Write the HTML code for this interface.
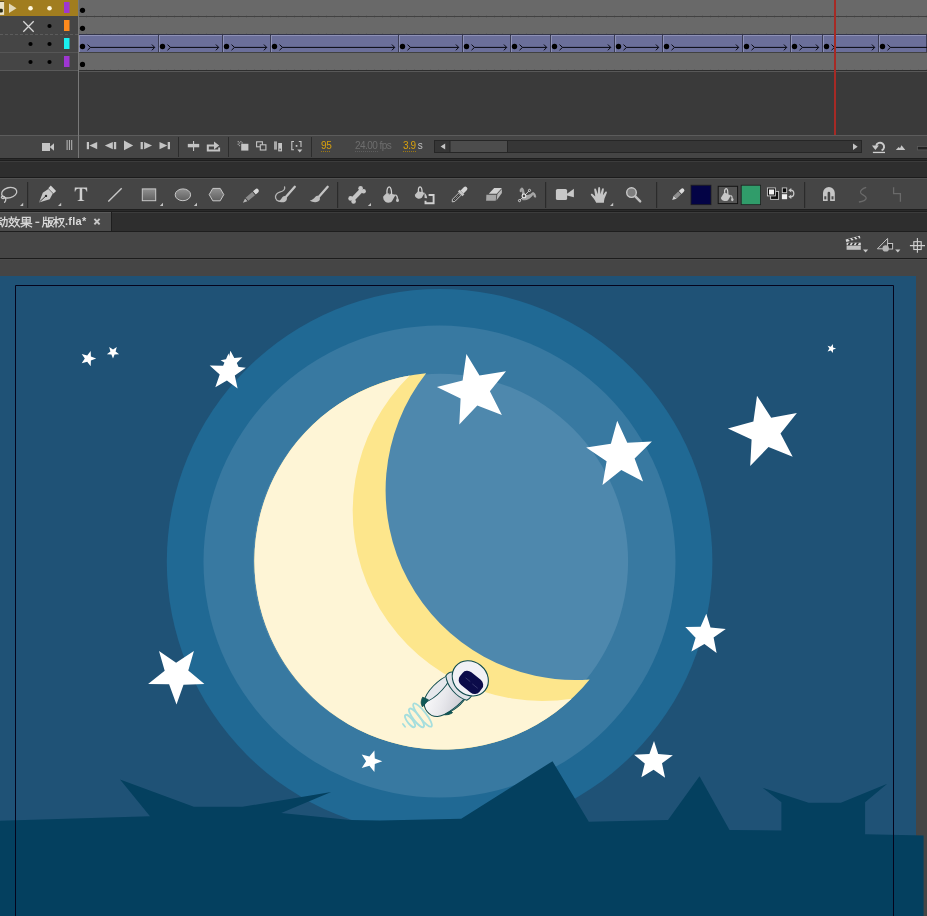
<!DOCTYPE html>
<html><head><meta charset="utf-8"><title>Animate</title>
<style>
html,body{margin:0;padding:0;}
body{width:927px;height:916px;overflow:hidden;background:#454545;position:relative;font-family:"Liberation Sans",sans-serif;}
.a{position:absolute;}
svg{position:absolute;left:0;top:0;overflow:visible;}
</style></head><body>

<div class="a" style="left:0;top:0;width:927px;height:135px;background:#3a3a3a"></div>
<div class="a" style="left:0;top:0;width:78px;height:16px;background:#a17d1f"></div>
<div class="a" style="left:0;top:16px;width:78px;height:54px;background:#454545"></div>
<div class="a" style="left:79px;top:0;width:848px;height:70px;background:#696969"></div>
<div class="a" style="left:79px;top:15px;width:848px;height:3px;background:repeating-linear-gradient(90deg,rgba(0,0,0,0) 0 7px,rgba(40,40,40,0.14) 7px 8px)"></div>
<div class="a" style="left:79px;top:33px;width:848px;height:3px;background:repeating-linear-gradient(90deg,rgba(0,0,0,0) 0 7px,rgba(40,40,40,0.14) 7px 8px)"></div>
<div class="a" style="left:79px;top:69px;width:848px;height:3px;background:repeating-linear-gradient(90deg,rgba(0,0,0,0) 0 7px,rgba(40,40,40,0.14) 7px 8px)"></div>
<div class="a" style="left:79px;top:16px;width:848px;height:1px;background:#414141"></div>
<div class="a" style="left:79px;top:34px;width:848px;height:1px;background:#33354a"></div>
<div class="a" style="left:79px;top:52px;width:848px;height:1px;background:#414141"></div>
<div class="a" style="left:79px;top:70px;width:848px;height:1px;background:#2e2e2e"></div>
<div class="a" style="left:0;top:34px;width:78px;height:1px;background:repeating-linear-gradient(90deg,#5c5c5c 0 3px,#454545 3px 5px)"></div>
<div class="a" style="left:0;top:52px;width:78px;height:1px;background:#565656"></div>
<div class="a" style="left:0;top:70px;width:78px;height:1px;background:#5a5a5a"></div>
<div class="a" style="left:79px;top:71px;width:848px;height:1px;background:#585858"></div>
<div class="a" style="left:78px;top:0;width:1px;height:158px;background:#787878"></div>
<div class="a" style="left:79px;top:35px;width:79px;height:17px;background:#6b6f9a;box-shadow:inset 1px 1px 0 #8e91b6"></div>
<div class="a" style="left:158px;top:35px;width:1px;height:17px;background:#3a3c55"></div>
<div class="a" style="left:159px;top:35px;width:63px;height:17px;background:#6b6f9a;box-shadow:inset 1px 1px 0 #8e91b6"></div>
<div class="a" style="left:222px;top:35px;width:1px;height:17px;background:#3a3c55"></div>
<div class="a" style="left:223px;top:35px;width:47px;height:17px;background:#6b6f9a;box-shadow:inset 1px 1px 0 #8e91b6"></div>
<div class="a" style="left:270px;top:35px;width:1px;height:17px;background:#3a3c55"></div>
<div class="a" style="left:271px;top:35px;width:127px;height:17px;background:#6b6f9a;box-shadow:inset 1px 1px 0 #8e91b6"></div>
<div class="a" style="left:398px;top:35px;width:1px;height:17px;background:#3a3c55"></div>
<div class="a" style="left:399px;top:35px;width:63px;height:17px;background:#6b6f9a;box-shadow:inset 1px 1px 0 #8e91b6"></div>
<div class="a" style="left:462px;top:35px;width:1px;height:17px;background:#3a3c55"></div>
<div class="a" style="left:463px;top:35px;width:47px;height:17px;background:#6b6f9a;box-shadow:inset 1px 1px 0 #8e91b6"></div>
<div class="a" style="left:510px;top:35px;width:1px;height:17px;background:#3a3c55"></div>
<div class="a" style="left:511px;top:35px;width:39px;height:17px;background:#6b6f9a;box-shadow:inset 1px 1px 0 #8e91b6"></div>
<div class="a" style="left:550px;top:35px;width:1px;height:17px;background:#3a3c55"></div>
<div class="a" style="left:551px;top:35px;width:63px;height:17px;background:#6b6f9a;box-shadow:inset 1px 1px 0 #8e91b6"></div>
<div class="a" style="left:614px;top:35px;width:1px;height:17px;background:#3a3c55"></div>
<div class="a" style="left:615px;top:35px;width:47px;height:17px;background:#6b6f9a;box-shadow:inset 1px 1px 0 #8e91b6"></div>
<div class="a" style="left:662px;top:35px;width:1px;height:17px;background:#3a3c55"></div>
<div class="a" style="left:663px;top:35px;width:79px;height:17px;background:#6b6f9a;box-shadow:inset 1px 1px 0 #8e91b6"></div>
<div class="a" style="left:742px;top:35px;width:1px;height:17px;background:#3a3c55"></div>
<div class="a" style="left:743px;top:35px;width:47px;height:17px;background:#6b6f9a;box-shadow:inset 1px 1px 0 #8e91b6"></div>
<div class="a" style="left:790px;top:35px;width:1px;height:17px;background:#3a3c55"></div>
<div class="a" style="left:791px;top:35px;width:31px;height:17px;background:#6b6f9a;box-shadow:inset 1px 1px 0 #8e91b6"></div>
<div class="a" style="left:822px;top:35px;width:1px;height:17px;background:#3a3c55"></div>
<div class="a" style="left:823px;top:35px;width:55px;height:17px;background:#6b6f9a;box-shadow:inset 1px 1px 0 #8e91b6"></div>
<div class="a" style="left:878px;top:35px;width:1px;height:17px;background:#3a3c55"></div>
<div class="a" style="left:879px;top:35px;width:47px;height:17px;background:#6b6f9a;box-shadow:inset 1px 1px 0 #8e91b6"></div>
<div class="a" style="left:926px;top:35px;width:1px;height:17px;background:#3a3c55"></div>
<svg width="927" height="135"><path d="M90.5 47.4H154.7M87.5 44.6l3 2.8l-3 2.8M151.89999999999998 44.5l2.8 2.9l-2.8 2.9" stroke="#06060f" stroke-width="1" fill="none"/><circle cx="82.5" cy="46.5" r="2.7" fill="#000"/><path d="M170.5 47.4H218.7M167.5 44.6l3 2.8l-3 2.8M215.89999999999998 44.5l2.8 2.9l-2.8 2.9" stroke="#06060f" stroke-width="1" fill="none"/><circle cx="162.5" cy="46.5" r="2.7" fill="#000"/><path d="M234.5 47.4H266.7M231.5 44.6l3 2.8l-3 2.8M263.9 44.5l2.8 2.9l-2.8 2.9" stroke="#06060f" stroke-width="1" fill="none"/><circle cx="226.5" cy="46.5" r="2.7" fill="#000"/><path d="M282.5 47.4H394.7M279.5 44.6l3 2.8l-3 2.8M391.9 44.5l2.8 2.9l-2.8 2.9" stroke="#06060f" stroke-width="1" fill="none"/><circle cx="274.5" cy="46.5" r="2.7" fill="#000"/><path d="M410.5 47.4H458.7M407.5 44.6l3 2.8l-3 2.8M455.9 44.5l2.8 2.9l-2.8 2.9" stroke="#06060f" stroke-width="1" fill="none"/><circle cx="402.5" cy="46.5" r="2.7" fill="#000"/><path d="M474.5 47.4H506.7M471.5 44.6l3 2.8l-3 2.8M503.9 44.5l2.8 2.9l-2.8 2.9" stroke="#06060f" stroke-width="1" fill="none"/><circle cx="466.5" cy="46.5" r="2.7" fill="#000"/><path d="M522.5 47.4H546.7M519.5 44.6l3 2.8l-3 2.8M543.9000000000001 44.5l2.8 2.9l-2.8 2.9" stroke="#06060f" stroke-width="1" fill="none"/><circle cx="514.5" cy="46.5" r="2.7" fill="#000"/><path d="M562.5 47.4H610.7M559.5 44.6l3 2.8l-3 2.8M607.9000000000001 44.5l2.8 2.9l-2.8 2.9" stroke="#06060f" stroke-width="1" fill="none"/><circle cx="554.5" cy="46.5" r="2.7" fill="#000"/><path d="M626.5 47.4H658.7M623.5 44.6l3 2.8l-3 2.8M655.9000000000001 44.5l2.8 2.9l-2.8 2.9" stroke="#06060f" stroke-width="1" fill="none"/><circle cx="618.5" cy="46.5" r="2.7" fill="#000"/><path d="M674.5 47.4H738.7M671.5 44.6l3 2.8l-3 2.8M735.9000000000001 44.5l2.8 2.9l-2.8 2.9" stroke="#06060f" stroke-width="1" fill="none"/><circle cx="666.5" cy="46.5" r="2.7" fill="#000"/><path d="M754.5 47.4H786.7M751.5 44.6l3 2.8l-3 2.8M783.9000000000001 44.5l2.8 2.9l-2.8 2.9" stroke="#06060f" stroke-width="1" fill="none"/><circle cx="746.5" cy="46.5" r="2.7" fill="#000"/><path d="M802.5 47.4H818.7M799.5 44.6l3 2.8l-3 2.8M815.9000000000001 44.5l2.8 2.9l-2.8 2.9" stroke="#06060f" stroke-width="1" fill="none"/><circle cx="794.5" cy="46.5" r="2.7" fill="#000"/><path d="M834.5 47.4H874.7M831.5 44.6l3 2.8l-3 2.8M871.9000000000001 44.5l2.8 2.9l-2.8 2.9" stroke="#06060f" stroke-width="1" fill="none"/><circle cx="826.5" cy="46.5" r="2.7" fill="#000"/><path d="M890.5 47.4H1026.7M887.5 44.6l3 2.8l-3 2.8M1023.9000000000001 44.5l2.8 2.9l-2.8 2.9" stroke="#06060f" stroke-width="1" fill="none"/><circle cx="882.5" cy="46.5" r="2.7" fill="#000"/><circle cx="82.5" cy="10.3" r="2.6" fill="#000"/><circle cx="82.5" cy="28.3" r="2.6" fill="#000"/><circle cx="82.5" cy="64.4" r="2.6" fill="#000"/></svg>
<svg width="80" height="72"><rect x="0" y="1.6" width="4.1" height="13.3" fill="#ebe3c8"/><rect x="-1" y="8.8" width="3.8" height="3.7" rx="1.3" fill="#2a2a14"/><rect x="0" y="1" width="4.1" height="0.8" fill="#4a3a10"/><path d="M9 3.5L16.5 8.3L9 13Z" fill="#e3d9b8"/><circle cx="30.5" cy="8.2" r="2.3" fill="#fff8e0"/><circle cx="49.5" cy="8.2" r="2.3" fill="#fff8e0"/><rect x="64" y="2" width="5.5" height="11" fill="#9e36d2"/><path d="M23.3 21.3L33.7 31.7M33.7 21.3L23.3 31.7" stroke="#d8d8d8" stroke-width="1.3"/><circle cx="49.5" cy="26" r="2.1" fill="#000"/><rect x="64" y="20" width="5.5" height="11" fill="#ff8a1c"/><circle cx="30.5" cy="44" r="2.1" fill="#000"/><circle cx="49.5" cy="44" r="2.1" fill="#000"/><rect x="64" y="38" width="5.5" height="11" fill="#19f0f0"/><circle cx="30.5" cy="62" r="2.1" fill="#000"/><circle cx="49.5" cy="62" r="2.1" fill="#000"/><rect x="64" y="56" width="5.5" height="11" fill="#9e36d2"/></svg>
<div class="a" style="left:834px;top:0;width:1.7px;height:136px;background:#a62a25"></div>
<div class="a" style="left:0;top:135px;width:927px;height:1px;background:#5c5c5c"></div>
<div class="a" style="left:0;top:136px;width:927px;height:22px;background:#454545"></div>
<div class="a" style="left:78px;top:135px;width:1px;height:23px;background:#787878"></div>
<svg width="927" height="160" viewBox="0 0 927 160">
<g fill="#c4c4c4">
<!-- camera -->
<path d="M42 143h8v8h-8zM50 146.8l4-3.6v7.6l-4-3.6z"/>
<!-- 3 bars -->
<rect x="66.6" y="140" width="1" height="10" fill="#b8b8b8"/><rect x="68.9" y="140" width="1" height="10" fill="#b8b8b8"/><rect x="71.2" y="140" width="1" height="10" fill="#b8b8b8"/>
<!-- first -->
<rect x="86.8" y="142" width="2.2" height="7.2"/><path d="M97.2 142v7.2l-7.8-3.6z"/>
<!-- step back -->
<path d="M112.8 142v7.2l-8-3.6z"/><rect x="113.9" y="142" width="2.3" height="7.2"/>
<!-- play -->
<path d="M124 140.6v9.6l9.2-4.8z"/>
<!-- step fwd -->
<rect x="140.6" y="142" width="2.3" height="7.2"/><path d="M144.1 142v7.2l8-3.6z"/>
<!-- last -->
<path d="M159.5 142v7.2l7.8-3.6z"/><rect x="167.7" y="142" width="2.3" height="7.2"/>
<!-- center frame -->
<rect x="187.8" y="143.9" width="11.4" height="3.4"/><rect x="193" y="141" width="1.1" height="10"/>
<!-- loop -->
<path d="M206.8 144.5h7.2v-2.9l5.2 3.9l-5.2 3.9v-2.9h-5.2v2.9h9.4v-2h1.9v4h-13.3z"/>
<!-- onion skin -->
<rect x="241.2" y="143.8" width="7.2" height="6.8"/>
<g fill="#9a9a9a"><rect x="237.6" y="141" width="1.3" height="1.3"/><rect x="240.2" y="141" width="1.3" height="1.3"/><rect x="238.9" y="142.3" width="1.3" height="1.3"/><rect x="237.6" y="143.6" width="1.3" height="1.3"/><rect x="238.9" y="144.9" width="1.3" height="1.3"/><rect x="241.5" y="142.3" width="1.3" height="1.3"/></g>
</g>
<g fill="none" stroke="#c4c4c4" stroke-width="1.1">
<!-- onion outlines -->
<rect x="256.6" y="141.8" width="5.8" height="5"/><rect x="260.3" y="144.8" width="5.6" height="5.2" fill="#444"/>
<!-- markers -->
<path d="M294 141.5h-2.2v8.3h2.2M298.8 141.5h2.2v5.5"/>
</g>
<g fill="#c4c4c4">
<!-- edit multiple -->
<rect x="274" y="141.4" width="3" height="8.2" fill="#a8a8a8"/><rect x="278.2" y="143" width="3.8" height="8.4"/><rect x="279.4" y="148.6" width="1.4" height="1.6" fill="#555"/>
<rect x="295.7" y="145" width="1.7" height="1.8"/><path d="M297.3 149.6h5l-2.5 3z"/>
</g>
<!-- separators -->
<rect x="178" y="137" width="1" height="20" fill="#2c2c2c"/><rect x="228" y="137" width="1" height="20" fill="#2c2c2c"/><rect x="311" y="137" width="1" height="20" fill="#2c2c2c"/>
<!-- scrollbar -->
<rect x="434.5" y="140.5" width="427" height="12" fill="#363636" stroke="#262626" stroke-width="1"/>
<rect x="450" y="141" width="57" height="11" fill="#4c4c4c"/><rect x="449.5" y="141" width="1" height="11" fill="#262626"/><rect x="507" y="141" width="1" height="11" fill="#262626"/>
<path d="M445.2 143.6v6l-4.6-3z" fill="#c4c4c4"/>
<path d="M853 143.6v6.4l4.7-3.2z" fill="#c4c4c4"/>
<!-- reset -->
<path d="M876.2 145.8A4 4 0 1 1 881.6 150.4" fill="none" stroke="#cacaca" stroke-width="2"/>
<path d="M871.9 145.6H878.9L875.4 149.9Z" fill="#cacaca"/>
<rect x="872.9" y="151.8" width="12.1" height="1.3" fill="#d0d0d0"/>
<!-- mountains -->
<path d="M895.8 150.1L898.7 147L900 148.3L901.5 145.3L905.3 150.1Z" fill="#c8c8c8"/>
<!-- slider -->
<rect x="917.5" y="146.5" width="12" height="3.4" fill="#222" stroke="#5a5a5a" stroke-width="0.8"/>
</svg>
<div class="a" style="left:321px;top:140px;font-size:10px;line-height:12px;color:#d8a10e;letter-spacing:-0.4px;will-change:transform">95</div>
<div class="a" style="left:321px;top:151px;width:10px;height:1px;background:repeating-linear-gradient(90deg,#a07a10 0 1px,transparent 1px 2px)"></div>
<div class="a" style="left:354.5px;top:140px;font-size:10px;line-height:12px;color:#6e6e6e;letter-spacing:-0.55px;white-space:nowrap;will-change:transform">24.00 fps</div>
<div class="a" style="left:354.5px;top:151px;width:23px;height:1px;background:repeating-linear-gradient(90deg,#5e5e5e 0 1px,transparent 1px 2px)"></div>
<div class="a" style="left:403px;top:140px;font-size:10px;line-height:12px;color:#d8a10e;letter-spacing:-0.4px;white-space:nowrap;will-change:transform">3.9<span style="color:#c0c0c0;margin-left:2px">s</span></div>
<div class="a" style="left:403px;top:151px;width:13px;height:1px;background:repeating-linear-gradient(90deg,#a07a10 0 1px,transparent 1px 2px)"></div>

<div class="a" style="left:0px;top:158px;width:927px;height:1px;background:#1e1e1e"></div>
<div class="a" style="left:0px;top:159px;width:927px;height:1px;background:#2a2a2a"></div>
<div class="a" style="left:0px;top:160px;width:927px;height:1px;background:#1e1e1e"></div>
<div class="a" style="left:0px;top:161px;width:927px;height:1px;background:#3c3c3c"></div>
<div class="a" style="left:0px;top:162px;width:927px;height:15px;background:#2e2e2e"></div>
<div class="a" style="left:0px;top:177px;width:927px;height:1px;background:#1c1c1c"></div>
<div class="a" style="left:0px;top:178px;width:927px;height:1px;background:#525252"></div>
<div class="a" style="left:0px;top:179px;width:927px;height:30px;background:#454545"></div>
<svg width="927" height="260" viewBox="0 0 927 260">
<defs>
<linearGradient id="gs" x1="0" y1="0" x2="0" y2="1"><stop offset="0" stop-color="#909090"/><stop offset="1" stop-color="#606060"/></linearGradient>
</defs>
<!-- separators -->
<g fill="#2b2b2b"><rect x="27" y="182" width="1.2" height="26"/><rect x="337" y="182" width="1.2" height="26"/><rect x="545" y="182" width="1.2" height="26"/><rect x="656" y="182" width="1.2" height="26"/><rect x="804" y="182" width="1.2" height="26"/></g>
<!-- dropdown corner triangles -->
<path d="M23.2 202.8v3.2h-3.2z" fill="#c4c4c4"/><path d="M61.2 202.8v3.2h-3.2z" fill="#c4c4c4"/><path d="M163 202.8v3.2h-3.2z" fill="#c4c4c4"/><path d="M197 202.8v3.2h-3.2z" fill="#c4c4c4"/><path d="M371 202.9v3.2h-3.2z" fill="#c4c4c4"/><path d="M613.2 202.8v3.2h-3.2z" fill="#c4c4c4"/>
<!-- lasso -->
<g fill="none" stroke="#c6c6c6" stroke-width="1.3" stroke-linecap="round">
<ellipse cx="9.2" cy="192.7" rx="7.7" ry="5.1" transform="rotate(-14 9.2 192.7)"/>
<path d="M3.6 196.3c-2.2-.6-3 1.6-1.2 2.2c1.6.5 2.8-.8 1.8-2c1.8 1.8 2 4 .4 5.8"/>
</g>
<!-- pen -->
<path d="M39 202.4L42.8 192.8L48.3 189L52.8 193.5L49.7 199.3Z" fill="#c8c8c8"/>
<path d="M50.8 185.6L56.1 191L53.5 193.6L48.3 188.3Z" fill="#d2d2d2"/>
<path d="M39.4 202L45.7 196.2" stroke="#2a2a2a" stroke-width="0.9"/><circle cx="46" cy="195.9" r="1.2" fill="#2a2a2a"/>
<!-- T -->
<path d="M74.8 187.6H87.1L87.3 191.6H86.5C86.2 189.6 85.5 188.7 83.6 188.7H82.2V198.8C82.2 200 82.6 200.3 84.3 200.4V201H77.6V200.4C79.3 200.3 79.7 200 79.7 198.8V188.7H78.3C76.4 188.7 75.7 189.6 75.4 191.6H74.6Z" fill="#cecece"/>
<!-- line -->
<path d="M108.3 201.4L121.7 188.3" stroke="#c8c8c8" stroke-width="1.4"/>
<!-- rect -->
<rect x="142.3" y="188.9" width="13.4" height="11.8" fill="url(#gs)" stroke="#c8c8c8" stroke-width="1"/>
<!-- ellipse -->
<ellipse cx="182.9" cy="194.8" rx="7.7" ry="5.9" fill="url(#gs)" stroke="#c8c8c8" stroke-width="1"/>
<!-- hexagon -->
<path d="M209.2 194.6L212.8 188.4H220.2L223.8 194.6L220.2 200.8H212.8Z" fill="url(#gs)" stroke="#c8c8c8" stroke-width="1"/>
<!-- pencil -->
<g transform="translate(242.9 202.8) rotate(-40.8)">
<path d="M0 0L5 -2.1V2.1Z" fill="#b4b4b4"/><rect x="5" y="-2.1" width="9.5" height="4.2" fill="#8a8a8a"/><rect x="14.3" y="-2.1" width="0.8" height="4.2" fill="#333"/><rect x="4.6" y="-2.1" width="0.7" height="4.2" fill="#333"/><path d="M15.1 -2.1H18.3A2.1 2.1 0 0 1 18.3 2.1H15.1Z" fill="#d8d8d8"/>
</g>
<!-- brush with curve -->
<path d="M284.6 187c.6 3-1.4 4.2-4.2 4.8c-3.2.8-5.6 3.4-4.8 6.4c.5 1.8 1.8 2.7 3.5 3" fill="none" stroke="#b4b4b4" stroke-width="1.3" stroke-linecap="round"/>
<path d="M294.8 186.8L285.8 196.9" stroke="#c4c4c4" stroke-width="2.3" stroke-linecap="round"/>
<path d="M285.9 196.3c1.8 1.6 1.4 4.2-.8 5.4c-2.4 1.2-5.2.6-7-.4c2.4-.6 3.2-2.6 4.4-4.2c1-1.2 2.4-1.4 3.4-.8z" fill="#bdbdbd"/>
<!-- brush -->
<path d="M327.7 186.8L318.7 196.9" stroke="#c4c4c4" stroke-width="2.3" stroke-linecap="round"/>
<path d="M318.8 196.2c1.8 1.6 1.5 4.3-.7 5.4c-2.7 1.3-6.1.5-8.3-1c2.8-.5 4.2-2.2 5.6-3.8c1-1.2 2.4-1.3 3.4-.6z" fill="#bdbdbd"/>
<!-- bone -->
<g fill="#c4c4c4"><path d="M352.3 199.8L361.9 189.8" stroke="#c4c4c4" stroke-width="4.2"/><circle cx="350.6" cy="198.4" r="2.3"/><circle cx="353.6" cy="201.4" r="2.3"/><circle cx="360.6" cy="188.2" r="2.3"/><circle cx="363.6" cy="191.2" r="2.3"/></g>
<!-- ink bottle -->
<path d="M383.2 196.6L386.6 192.9L395.7 194.8L391.8 201.5C390 203 387.3 203 385.6 202C383.8 200.8 383 198.6 383.2 196.6Z" fill="#c2c2c2"/>
<path d="M387 193.3C386.7 190 387.5 187 389.2 186.9C390.9 186.8 391.6 190.3 391.6 194.6" fill="none" stroke="#d0d0d0" stroke-width="1.3"/>
<path d="M389.3 189.5V194.5" stroke="#555" stroke-width="0.9"/>
<path d="M395.4 194.9c1.6.8 2.1 2.4 2 4" fill="none" stroke="#c2c2c2" stroke-width="1.3"/><ellipse cx="397.5" cy="200.2" rx="1.4" ry="1.9" fill="#c2c2c2"/>
<!-- paint bucket -->
<path d="M414.9 194.8L418 191.3L424.7 192.8L421.8 197.7C420.4 198.7 418.9 198.9 417.6 198.5C415.7 197.8 414.8 196.4 414.9 194.8Z" fill="#c2c2c2"/>
<path d="M418.5 191.8C418.1 189 418.7 186.9 420.1 186.8C421.5 186.8 422.1 189.5 422.1 193" fill="none" stroke="#d0d0d0" stroke-width="1.3"/>
<path d="M424.4 192.8c1.6 1 2.4 3 2.8 5.4l-2.6-.2z" fill="#c2c2c2"/>
<path d="M428.6 195H433.6V203.2H425.5V200.8" fill="none" stroke="#d0d0d0" stroke-width="1.9"/>
<!-- eyedropper -->
<g transform="translate(452.2 201.8) rotate(-45)">
<path d="M0 0L2 -1.6H11.5V1.6H2Z" fill="#3a3a3a" stroke="#c8c8c8" stroke-width="0.9"/>
<path d="M3 0H10.5" stroke="#c8c8c8" stroke-width="0.7" stroke-dasharray="1.2 1"/>
<rect x="11.3" y="-3.3" width="2.6" height="6.6" fill="#c4c4c4"/>
<path d="M13.9 -2.1H18.5A2.1 2.1 0 0 1 18.5 2.1H13.9Z" fill="#d4d4d4"/>
</g>
<!-- eraser -->
<path d="M488.8 193.8L494.2 187.9H501.9L496.7 193.8Z" fill="#d2d2d2"/>
<path d="M486.4 194.8H496.5L495.7 200.7H486.1Z" fill="#a6a6a6"/>
<path d="M497.4 194L501.9 188.9V192.9L496.5 200.5Z" fill="#b8b8b8"/>
<!-- width tool -->
<path d="M520 191.6C519.8 189 521 187.7 522.3 188C523.8 188.5 524 192.5 524.8 195.5C528 196 530.5 194.5 532 193C533.8 191.7 535.5 193.5 535.8 197.2L534.3 197C534 195 533.4 194.3 532.6 194.9C530.5 198 527.5 200.3 522.5 199.8C522.8 196.5 522.5 192 522 190.3C521.5 189.8 521.3 190.5 521.3 191.8Z" fill="#a4a4a4" stroke="#b8b8b8" stroke-width="0.6"/>
<path d="M519.5 200.6L529.5 190.4" stroke="#e8e8e8" stroke-width="0.8"/>
<circle cx="524" cy="195.9" r="1.9" fill="#4a4a4a" stroke="#f0f0f0" stroke-width="1.1"/><circle cx="529.5" cy="190.4" r="1.1" fill="#4a4a4a" stroke="#e8e8e8" stroke-width="0.8"/><circle cx="519.5" cy="200.6" r="1.1" fill="#4a4a4a" stroke="#e8e8e8" stroke-width="0.8"/>
<!-- camera -->
<rect x="555.9" y="189" width="11.2" height="11" rx="1.6" fill="#c8c8c8"/><path d="M567 193.8L573.9 188.7V197.3L567 195.4Z" fill="#c8c8c8"/>
<!-- hand -->
<path d="M596.2 202.8C595 200 593 197.5 590.9 195C590.5 193.8 591.8 193.3 592.8 194.2L595.3 196.5L594.2 189.8C594.1 188.3 595.8 188 596.2 189.5L597.7 194.2L598.2 188C598.3 186.5 600 186.5 600.1 188L600.4 194.2L601.9 189.2C602.4 187.8 604 188.2 603.8 189.7L602.9 195.2L605.2 192C606 191 607.3 191.7 606.8 193L604.5 198.5C604 200 604 201.5 603.9 202.8Z" fill="#c4c4c4"/>
<!-- magnifier -->
<circle cx="631.5" cy="192.6" r="4.8" fill="#7e7e7e" stroke="#c8c8c8" stroke-width="1.4"/><path d="M635.3 196.4L640.2 201.4" stroke="#c0c0c0" stroke-width="2.4" stroke-linecap="round"/>
<!-- small pencil -->
<g transform="translate(672.2 200) rotate(-43.5)">
<path d="M0 0L4 -2V2Z" fill="#d0d0d0"/><rect x="4" y="-2" width="6.5" height="4" fill="#8e8e8e"/><rect x="10.3" y="-2" width="0.7" height="4" fill="#3a3a3a"/><path d="M11 -2H14A2 2 0 0 1 14 2H11Z" fill="#dcdcdc"/>
</g>
<!-- swatches -->
<rect x="691" y="185.2" width="20" height="19.5" fill="#030345" stroke="#1e1e1e" stroke-width="0.8"/>
<rect x="718.2" y="186.3" width="19.4" height="17.3" fill="#545454" stroke="#151515" stroke-width="1"/>
<path d="M721 197.7L724.4 192.2L730.9 195.4L727.9 200.4C726.5 201.2 724.8 201.3 723.5 200.8C721.7 200.1 720.9 199 721 197.7Z" fill="#c6c6c6"/>
<path d="M724.7 192.6C724.4 190.3 725 188.6 726.2 188.6C727.4 188.6 727.9 191 727.8 194" fill="none" stroke="#d4d4d4" stroke-width="1.2"/>
<path d="M730.6 195.4c1.2.6 1.7 2 1.6 3.4" fill="none" stroke="#c6c6c6" stroke-width="1.2"/><ellipse cx="732.3" cy="199.6" rx="1.2" ry="1.6" fill="#c6c6c6"/>
<rect x="741.2" y="185.2" width="19.4" height="19.5" fill="#309c6a" stroke="#1e1e1e" stroke-width="0.8"/>
<!-- b/w -->
<rect x="770.6" y="191.4" width="8" height="8" fill="#111" stroke="#c8c8c8" stroke-width="0.9"/>
<rect x="767.4" y="187.9" width="8" height="8" fill="#111" stroke="#c8c8c8" stroke-width="0.9"/>
<rect x="769" y="189.5" width="5" height="5" fill="#f0f0f0"/>
<!-- swap -->
<rect x="782.3" y="187.9" width="4.4" height="4.8" fill="#050505" stroke="#c8c8c8" stroke-width="0.9"/>
<rect x="781.9" y="194.2" width="5.2" height="5" fill="#f0f0f0"/>
<path d="M790.5 190.2C793 190.2 793.8 192 793.8 193.5C793.8 195.2 793 196.8 790.5 196.8" fill="none" stroke="#c8c8c8" stroke-width="1.3"/>
<path d="M788.3 190.2L791.3 188V192.4Z M788.3 196.8L791.3 194.6V199Z" fill="#c8c8c8"/>
<!-- magnet -->
<path d="M825.3 200.6V193A3.6 3.6 0 0 1 832.5 193V200.6" fill="none" stroke="#c6c6c6" stroke-width="4.6"/>
<path d="M825.3 196.2V199.4M832.5 196.2V199.4" stroke="#4c4c4c" stroke-width="2"/>
<rect x="823" y="199.8" width="4.6" height="1" fill="#d4d4d4"/><rect x="830.2" y="199.8" width="4.6" height="1" fill="#d4d4d4"/>
<!-- S disabled -->
<path d="M866.2 187.4C862.5 188.6 859.8 190.5 860.6 192.8C861.6 195.2 866.2 195.2 866.2 198C866.2 200 863 201.4 858.9 202" fill="none" stroke="#6a6a6a" stroke-width="1.3"/>
<!-- Z disabled -->
<path d="M893.6 187.2V193.6H900.4V201.8" fill="none" stroke="#6a6a6a" stroke-width="1.3"/>
</svg>

<div class="a" style="left:0px;top:209px;width:927px;height:1px;background:#1e1e1e"></div>
<div class="a" style="left:0px;top:210px;width:927px;height:1px;background:#2a2a2a"></div>
<div class="a" style="left:0px;top:211px;width:927px;height:1px;background:#1e1e1e"></div>
<div class="a" style="left:0px;top:212px;width:927px;height:1px;background:#3c3c3c"></div>
<div class="a" style="left:0px;top:213px;width:927px;height:18px;background:#2e2e2e"></div>
<div class="a" style="left:0px;top:212px;width:111px;height:1px;background:#5a5a5a"></div>
<div class="a" style="left:0px;top:213px;width:111px;height:18px;background:#4a4a4a"></div>
<div class="a" style="left:111px;top:212px;width:1px;height:19px;background:#1e1e1e"></div>
<div class="a" style="left:0px;top:231px;width:927px;height:1px;background:#1e1e1e"></div>
<svg width="120" height="240" viewBox="0 0 120 240">
<g fill="none" stroke="#d6d6d6" stroke-width="1.3" stroke-linecap="square" stroke-linejoin="miter">
<!-- dong (partial) -->
<g transform="translate(-3.2 216.7) scale(1 0.95)">
<path d="M0.8 1.6H4.6M0 4.1H5.2M2.6 4.3L1 8.4L4.8 8M3.8 6.2L5 8.8"/>
<path d="M5.8 3H10.3C10.3 6 10.2 8.5 9.9 10.2L8.7 10.2M7.9 0.4C7.9 4.5 7.6 8 5.4 10.6"/>
</g>
<!-- xiao -->
<g transform="translate(8.6 216.7) scale(1 0.95)">
<path d="M2.7 0.3L2.9 1.3M0.3 2.4H5.5M1.9 3.6L0.7 5.4M3.7 3.6L5.1 5.4M4.5 5.6C3.6 7.8 2.2 9.6 0.3 10.7M1.4 5.9C2.5 7.8 3.8 9.4 5.5 10.7"/>
<path d="M7.6 0.4C7.2 2 6.7 3.2 6 4.3M6.9 3H10.9M9.9 3.2C9.2 6.4 8 9 6 10.7M7.1 5C8 7.4 9.2 9.4 10.9 10.7"/>
</g>
<!-- guo -->
<g transform="translate(20.8 216.7) scale(1 0.95)">
<path d="M1.6 0.8H9.4V5.8H1.6ZM1.6 3.3H9.4M5.5 0.8V10.9M0.2 7.4H10.8M5.3 7.6C4 9 2.4 10 0.5 10.7M5.7 7.6C7 9 8.6 10 10.7 10.7"/>
</g>
<!-- dash -->
<path d="M36 222.3H38.7"/>
<!-- ban -->
<g transform="translate(42.3 216.7) scale(1 0.95)">
<path d="M1.3 0.8V6.5C1.3 8.3 1 9.6 0.2 10.7M3.6 0.4V3.9M1.3 4H5M1.3 7H4.2V10.8"/>
<path d="M6.2 1.3H10.8M6.3 1.4V5.5C6.3 7.6 6 9.3 5.3 10.7M6.9 4.5H10.2C9.5 7.2 8.3 9.2 6.6 10.7M7.3 5.5C8.1 7.7 9.3 9.4 10.9 10.7"/>
</g>
<!-- quan -->
<g transform="translate(53.4 216.7) scale(1 0.95)">
<path d="M0.2 3H5M2.7 0.3V10.8M2.6 3.6C2.1 5.4 1.3 6.9 0.3 8M3 4.6L4.7 6.7"/>
<path d="M5.8 2H10.3C9.6 5.8 8 8.8 5.5 10.7M6.5 3.2C7.3 6.4 8.7 9 10.9 10.7"/>
</g>
</g>
<!-- close x -->
<path d="M94.4 218.8L99.6 224.4M99.6 218.8L94.4 224.4" stroke="#c8c8c8" stroke-width="1.9"/>
</svg>
<div class="a" style="left:65px;top:214.3px;font-size:11px;line-height:14px;color:#dadada;letter-spacing:0.25px;white-space:nowrap;font-weight:bold;will-change:transform">.fla*</div>

<div class="a" style="left:0px;top:232px;width:927px;height:26px;background:#454545"></div>
<svg width="927" height="260" viewBox="0 0 927 260">
<!-- clapper -->
<rect x="846.6" y="245.6" width="14.2" height="4.2" fill="#c2c2c2"/>
<rect x="846.6" y="242.7" width="14.2" height="2.5" fill="#d8d8d8"/>
<path d="M849 242.7l-1.4 2.5h2l1.4-2.5zM853 242.7l-1.4 2.5h2l1.4-2.5zM857 242.7l-1.4 2.5h2l1.4-2.5z" fill="#333"/>
<g transform="translate(846.3 242) rotate(-14.5)"><rect x="0" y="-2.6" width="14.6" height="2.5" fill="#d8d8d8"/><path d="M2.4 -2.6l1.4 2.5h2l-1.4-2.5zM6.4 -2.6l1.4 2.5h2l-1.4-2.5zM10.4 -2.6l1.4 2.5h2l-1.4-2.5z" fill="#333"/></g>
<path d="M863 249.5h5.2l-2.6 3.1z" fill="#c8c8c8"/>
<!-- symbol -->
<path d="M877.4 248.8L887.6 238.4V243.5" fill="none" stroke="#c4c4c4" stroke-width="1"/>
<path d="M877.4 248.8H883" stroke="#c4c4c4" stroke-width="1"/>
<rect x="887.6" y="243.5" width="5" height="5.5" fill="#2c2c2c" stroke="#c4c4c4" stroke-width="1"/>
<circle cx="885.7" cy="248.4" r="3.2" fill="#b4b4b4"/>
<path d="M895.2 249.5h5.2l-2.6 3.1z" fill="#c8c8c8"/>
<!-- crosshair -->
<path d="M909.9 245.6H925M917.4 238.1V252.8" stroke="#d0d0d0" stroke-width="1.1"/>
<rect x="913.8" y="241.7" width="7.4" height="7.8" fill="none" stroke="#d0d0d0" stroke-width="1.1"/>
</svg>

<div class="a" style="left:0px;top:258px;width:927px;height:1px;background:#1c1c1c"></div>
<div class="a" style="left:0px;top:259px;width:927px;height:1px;background:#4a4a4a"></div>
<div class="a" style="left:0px;top:260px;width:927px;height:16px;background:#454545"></div>
<div class="a" style="left:0;top:275.5px;width:916px;height:641px;background:#1f5276"></div>
<svg width="927" height="916" viewBox="0 0 927 916">
<defs><clipPath id="cs"><rect x="0" y="275.5" width="927" height="641"/></clipPath>
<clipPath id="cm"><ellipse cx="440.6" cy="561.3" rx="187.5" ry="187.5"/></clipPath>
<linearGradient id="gb" x1="0" y1="0" x2="1" y2="1"><stop offset="0" stop-color="#fff"/><stop offset="0.5" stop-color="#e8e8ec"/><stop offset="1" stop-color="#c6c6ce"/></linearGradient>
</defs>
<g clip-path="url(#cs)">
<circle cx="439.6" cy="561.8" r="272.8" fill="#206994"/>
<circle cx="439.5" cy="561.5" r="236" fill="#3879a1"/>
<ellipse cx="440.6" cy="561.3" rx="187.5" ry="187.5" fill="#4e88ad"/>
<path d="M426.15 373.35A188.5 188.5 0 1 0 589.62 679.44A189.5 189.5 0 0 1 426.15 373.35Z" fill="#fde68c"/>
<path d="M409.76 375.54A188.5 188.5 0 1 0 571.69 698.74A189.8 189.8 0 0 1 409.76 375.54Z" fill="#fef5d6"/>
<polygon points="90.7,351.0 90.9,356.6 96.2,358.6 90.9,360.6 90.7,366.2 87.2,361.8 81.7,363.3 84.8,358.6 81.7,353.9 87.2,355.4" fill="#fff"/>
<polygon points="116.8,347.0 115.6,351.4 119.1,354.2 114.6,354.4 113.0,358.6 111.4,354.4 106.9,354.2 110.4,351.4 109.2,347.0 113.0,349.5" fill="#fff"/>
<polygon points="230.4,350.8 234.3,358.0 242.4,357.2 236.8,363.1 240.1,370.6 232.7,367.1 226.6,372.5 227.6,364.4 220.6,360.3 228.6,358.8" fill="#fff"/>
<polygon points="228.5,353.5 232.5,366.3 245.8,367.7 234.8,375.4 237.6,388.5 226.9,380.5 215.3,387.2 219.7,374.5 209.7,365.6 223.1,365.8" fill="#fff"/>
<polygon points="466.4,354.0 479.5,375.5 506.0,371.3 489.9,391.3 501.9,415.1 477.3,405.5 459.3,424.6 460.6,398.4 436.9,386.9 462.6,380.4" fill="#fff"/>
<polygon points="617.2,420.8 627.3,442.7 651.9,441.6 634.6,458.5 643.1,481.4 621.3,470.0 602.5,484.9 606.6,461.2 586.2,447.6 610.9,443.8" fill="#fff"/>
<polygon points="757.0,395.8 771.2,417.7 796.9,413.0 780.5,433.5 792.7,456.7 768.5,447.1 750.2,466.0 751.6,439.5 727.9,428.4 753.4,421.5" fill="#fff"/>
<polygon points="832.9,344.1 833.0,347.4 836.1,348.6 833.0,349.8 832.9,353.1 830.8,350.5 827.6,351.4 829.4,348.6 827.6,345.8 830.8,346.7" fill="#fff"/>
<polygon points="706.3,613.8 710.5,627.5 725.8,629.0 713.6,637.4 716.6,653.1 704.4,643.9 691.4,651.6 695.6,637.8 685.3,627.1 700.6,626.7" fill="#fff"/>
<polygon points="159.0,650.9 176.1,662.8 193.9,650.9 188.3,670.4 204.4,683.9 183.5,684.8 176.5,704.4 169.1,684.3 148.1,683.9 164.7,670.8" fill="#fff"/>
<polygon points="374.4,750.4 374.8,758.4 382.3,761.2 374.8,764.0 374.4,772.0 369.4,765.8 361.7,767.9 366.1,761.2 361.7,754.5 369.4,756.6" fill="#fff"/>
<polygon points="654.0,741.0 658.2,754.0 672.9,755.2 662.0,763.2 665.1,777.7 653.6,769.7 641.4,777.3 644.8,763.6 634.1,754.8 649.4,754.0" fill="#fff"/>
<g transform="translate(445 697.5) rotate(-38)">
<!-- swirl -->
<g fill="none" stroke="#a6dedd" stroke-width="1.8" stroke-linecap="round">
<ellipse cx="-28.5" cy="0" rx="3.6" ry="14.5"/>
<ellipse cx="-35" cy="-1.5" rx="3.2" ry="11.5"/>
<ellipse cx="-42" cy="-3" rx="2.6" ry="7.5"/>
<path d="M-49.5 -5v3.5"/>
</g>
<!-- lower arm -->
<path d="M-12 11.5C-4 16.5 10 16.5 21 11L17 8Z" fill="#dfe3e6" stroke="#0e4a4c" stroke-width="1"/>
<path d="M-12.5 11.7C-10 14.8 -7 16.2 -3.5 16.6L-4 12.5Z" fill="#0e5a58" stroke="#0e4a4c" stroke-width="0.9"/>
<!-- body -->
<path d="M20 -12C9 -15.5 -10 -15.5 -17.5 -10.5C-24.5 -5.5 -24.5 5.5 -17.5 10.5C-10 15 9 15 20 11.5C22.5 4 22.5 -5 20 -12Z" fill="url(#gb)" stroke="#0e4a4c" stroke-width="1.1"/>
<!-- upper arm -->
<path d="M-20.5 -9C-11 -17 7 -18.5 18 -15C15 -8.5 -7 -4 -20.5 -9Z" fill="#e6e8ec" stroke="#0e4a4c" stroke-width="1"/>
<path d="M-23.5 -6.5C-23 -10.5 -20.5 -12.5 -17.5 -14L-14.5 -8.5C-17.5 -7.5 -20.5 -6.8 -23.5 -6.5Z" fill="#0e5a58" stroke="#0e4a4c" stroke-width="0.8"/>
<!-- collar -->
<path d="M14 -16.5C8.5 -8 9 7 15.5 15.5C19.5 16.5 23 15 24 13C17 6.5 17 -8 22 -15C20 -17 17 -17.5 14 -16.5Z" fill="#dfe2e8" stroke="#0e4a4c" stroke-width="1"/>
</g>
<g transform="translate(470.3 678.4) rotate(-51)">
<ellipse cx="0" cy="0" rx="16.6" ry="19" fill="#f1f1f6" stroke="#0e4a4c" stroke-width="1.1"/>
<rect x="-10.8" y="-9.5" width="16.2" height="25" rx="6" ry="6.5" fill="#0b0b4a"/>
<path d="M-2.5 -4v6M-3 5v7" stroke="#5a5e8c" stroke-width="0.5"/>
</g>

<polygon points="0.0,820.8 150.0,816.2 120.0,779.5 193.8,806.8 242.5,806.8 331.2,792.0 281.2,813.0 350.0,820.0 380.0,820.5 461.2,818.8 552.5,761.2 588.8,821.8 668.0,820.0 699.5,776.2 729.5,830.0 781.4,830.5 781.4,802.3 762.6,787.8 808.6,802.7 840.9,802.7 887.3,783.7 865.1,802.3 865.1,834.2 923.6,835.6 923.6,916.0 0.0,916.0" fill="#04405f"/>
<path d="M15.5 916V285.5H893.5V916" fill="none" stroke="#04041c" stroke-width="1"/>
</g></svg>
</body></html>
